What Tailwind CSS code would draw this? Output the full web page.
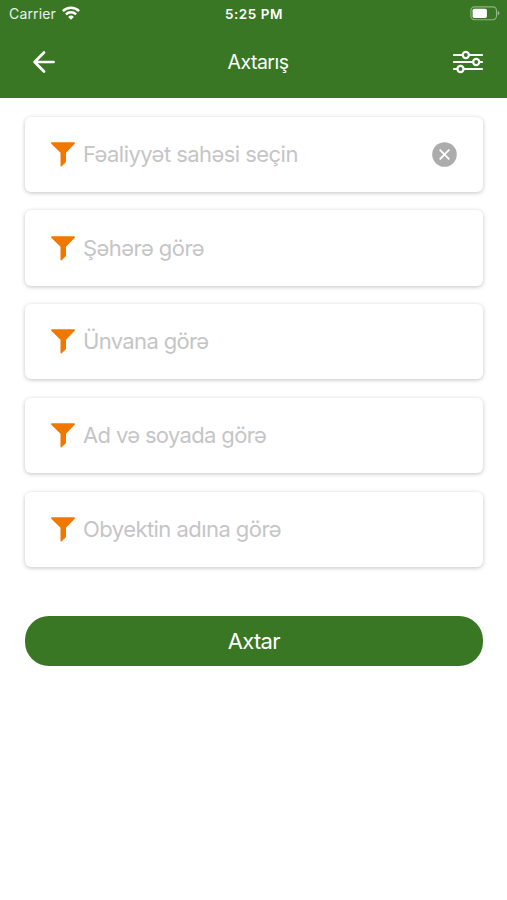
<!DOCTYPE html>
<html lang="az">
<head>
  <meta charset="UTF-8" />
  <meta name="viewport" content="width=device-width, initial-scale=1.0"/>
  <title>Axtarış</title>
  <script src="https://cdn.jsdelivr.net/npm/@tailwindcss/browser@4"></script>
</head>
<body class="bg-white font-['Inter',sans-serif] overflow-hidden">

  <!-- Funnel icon shared by the fields -->
  <svg class="hidden">
    <symbol id="funnel" viewBox="0 0 24 25">
      <path d="M.9.3h22.2c.8 0 1.1.8.6 1.4L15 10.800v8.6c0 .6-.2 1-.7 1.4l-3.600 3.5c-.5.5-1.2.3-1.2-.5v-13L.3 1.700C-.2 1.100.1.3.9.3z"/>
    </symbol>
  </svg>

  <header class="bg-[#397724] text-white h-[98.4px]">
    <!-- Status bar -->
    <div class="grid grid-cols-3 items-center h-7 pl-[9px] pr-[7px]">
      <div class="flex items-center gap-[6px]">
        <span class="text-[14px] leading-7 tracking-[0.15px] text-white/90">Carrier</span>
        <svg class="w-[18px] h-[14px] -mt-[2px]" viewBox="0 0 18 14" fill="none" stroke="white" stroke-width="2.4">
          <path d="M.9 5.1a11.5 11.5 0 0 1 16.2 0"/>
          <path d="M3.9 8.3a7.2 7.2 0 0 1 10.2 0"/>
          <path d="M9 13.7 6.2 10.9a4 4 0 0 1 5.6 0z" fill="white" stroke="none"/>
        </svg>
      </div>
      <span class="text-center text-[13.5px] leading-7 tracking-[0.55px] font-semibold -ml-[1px]">5:25 PM</span>
      <svg class="justify-self-end w-[30px] h-[15px] -mt-[2px]" viewBox="0 0 30 15">
        <rect x=".9" y=".9" width="25.6" height="12.8" rx="3.6" fill="none" stroke="white" stroke-opacity=".45" stroke-width="1.1"/>
        <rect x="2.6" y="2.7" width="14.3" height="9.2" rx="1.6" fill="white"/>
        <path d="M27.7 5.1c2.2.7 2.2 3.7 0 4.400z" fill="white" fill-opacity=".5"/>
      </svg>
    </div>

    <!-- Nav bar -->
    <div class="grid grid-cols-3 items-center h-[68px] pl-[33px] pr-[24px]">
      <svg class="w-[22px] h-[22px]" viewBox="0 0 22 22" fill="none" stroke="white" stroke-width="2.7" stroke-linecap="round" stroke-linejoin="round">
        <path d="M11 1.500 1.600 11 11 20.500M1.600 11h19"/>
      </svg>
      <h1 class="text-center text-[19.5px] tracking-[-0.5px] pt-[2px]">Axtarış</h1>
      <svg class="justify-self-end w-[30px] h-[24px]" viewBox="0 0 30 24" fill="none" stroke="white" stroke-width="2.2" stroke-linecap="round">
        <path d="M1 5h8.6M16 5h13M1 12h19M26.500 12H29M1 19h3.300M10.700 19H29"/>
        <circle cx="12.800" cy="5" r="3.100"/>
        <circle cx="23.200" cy="12" r="3.100"/>
        <circle cx="7.500" cy="19" r="3.100"/>
      </svg>
    </div>
  </header>

  <main class="pl-[25px] pr-[24.4px] pt-[18.400px]">
    <!-- Search fields -->
    <div class="flex flex-col gap-[18.4px] text-[22px] text-[#c5c5c7]">
      <div class="flex items-center h-[75.3px] pl-[26px] pr-[25.600px] rounded-md bg-white shadow-[0_1px_4px_rgba(0,0,0,0.24)]">
        <svg class="w-6 h-[25px] fill-[#f07800]"><use href="#funnel"/></svg>
        <span class="ml-2 tracking-[-0.55px]">Fəaliyyət sahəsi seçin</span>
        <svg class="ml-auto w-[25px] h-[25px]" viewBox="0 0 25 25">
          <circle cx="12.500" cy="12.500" r="12.300" fill="#acacac"/>
          <path d="m7.700 7.700 9.600 9.600M17.300 7.700l-9.600 9.600" stroke="white" stroke-width="1.800"/>
        </svg>
      </div>
      <div class="flex items-center h-[75.3px] pl-[26px] rounded-md bg-white shadow-[0_1px_4px_rgba(0,0,0,0.24)]">
        <svg class="w-6 h-[25px] fill-[#f07800]"><use href="#funnel"/></svg>
        <span class="ml-2 tracking-[-0.55px]">Şəhərə görə</span>
      </div>
      <div class="flex items-center h-[75.3px] pl-[26px] rounded-md bg-white shadow-[0_1px_4px_rgba(0,0,0,0.24)]">
        <svg class="w-6 h-[25px] fill-[#f07800]"><use href="#funnel"/></svg>
        <span class="ml-2 tracking-[-0.65px]">Ünvana görə</span>
      </div>
      <div class="flex items-center h-[75.3px] pl-[26px] rounded-md bg-white shadow-[0_1px_4px_rgba(0,0,0,0.24)]">
        <svg class="w-6 h-[25px] fill-[#f07800]"><use href="#funnel"/></svg>
        <span class="ml-2 tracking-[-0.65px]">Ad və soyada görə</span>
      </div>
      <div class="flex items-center h-[75.3px] pl-[26px] rounded-md bg-white shadow-[0_1px_4px_rgba(0,0,0,0.24)]">
        <svg class="w-6 h-[25px] fill-[#f07800]"><use href="#funnel"/></svg>
        <span class="ml-2 tracking-[-0.55px]">Obyektin adına görə</span>
      </div>
    </div>

    <button class="block mt-[49px] w-full h-[50.600px] rounded-[24px] bg-[#397724] text-white text-[22px] tracking-[-0.65px]">Axtar</button>
  </main>

</body>
</html>
